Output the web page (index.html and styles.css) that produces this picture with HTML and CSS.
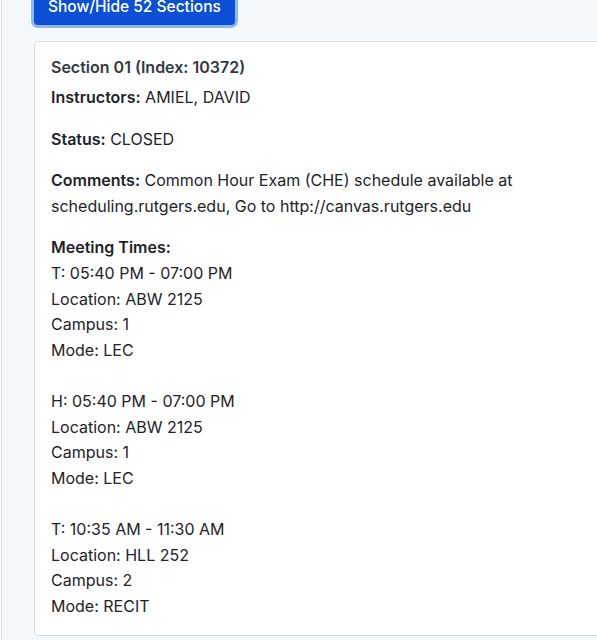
FILE: index.html
```html
<!DOCTYPE html>
<html>
<head>
<meta charset="utf-8">
<link rel="stylesheet" href="styles.css">
</head>
<body>
<div class="panel">
  <button class="toggle">Show/Hide 52 Sections</button>
  <div class="card">
    <h4 class="title">Section 01 (Index: 10372)</h4>
    <p><strong>Instructors:</strong> AMIEL, DAVID</p>
    <p><strong>Status:</strong> CLOSED</p>
    <p><strong>Comments:</strong> Common Hour Exam (CHE) schedule available at scheduling.rutgers.edu, Go to http://canvas.rutgers.edu</p>
    <p class="last"><strong>Meeting Times:</strong><br>
      T: 05:40 PM - 07:00 PM<br>Location: ABW 2125<br>Campus: 1<br>Mode: LEC<br><br>
      H: 05:40 PM - 07:00 PM<br>Location: ABW 2125<br>Campus: 1<br>Mode: LEC<br><br>
      T: 10:35 AM - 11:30 AM<br>Location: HLL 252<br>Campus: 2<br>Mode: RECIT
    </p>
  </div>
</div>
</body>
</html>
```
FILE: styles.css
```css
html, body {
  margin: 0;
  padding: 0;
  background: #ffffff;
  overflow: hidden;
}
body {
  font-family: Inter, "Liberation Sans", sans-serif;
  font-size: 16px;
  color: #1f2328;
}
.panel {
  margin-left: 1px;
  border-left: 1px solid #dcdfe3;
  background: #f5f8fb;
  padding: 0 0 40px 32px;
  min-height: 700px;
  overflow: hidden;
}
.toggle {
  display: block;
  margin: -13px 0 16px 0;
  height: 38px;
  padding: 0 14px;
  background: #0b50d4;
  color: #ffffff;
  border: none;
  border-radius: 4px;
  font-family: Inter, "Liberation Sans", sans-serif;
  font-size: 15.5px;
  font-weight: 500;
  box-shadow: 0 0 0 3px #8fb6f7;
}
.card {
  width: 620px;
  background: #ffffff;
  border: 1px solid #dcdde0;
  border-radius: 4px;
  padding: 16px;
  line-height: 1.6;
}
.title {
  margin: 0 0 9px;
  font-size: 16px;
  line-height: 18px;
  font-weight: 600;
  color: #333840;
}
p {
  margin: 0 0 16px;
}
p.last {
  margin-bottom: 0;
}
strong {
  font-weight: 600;
}
```
